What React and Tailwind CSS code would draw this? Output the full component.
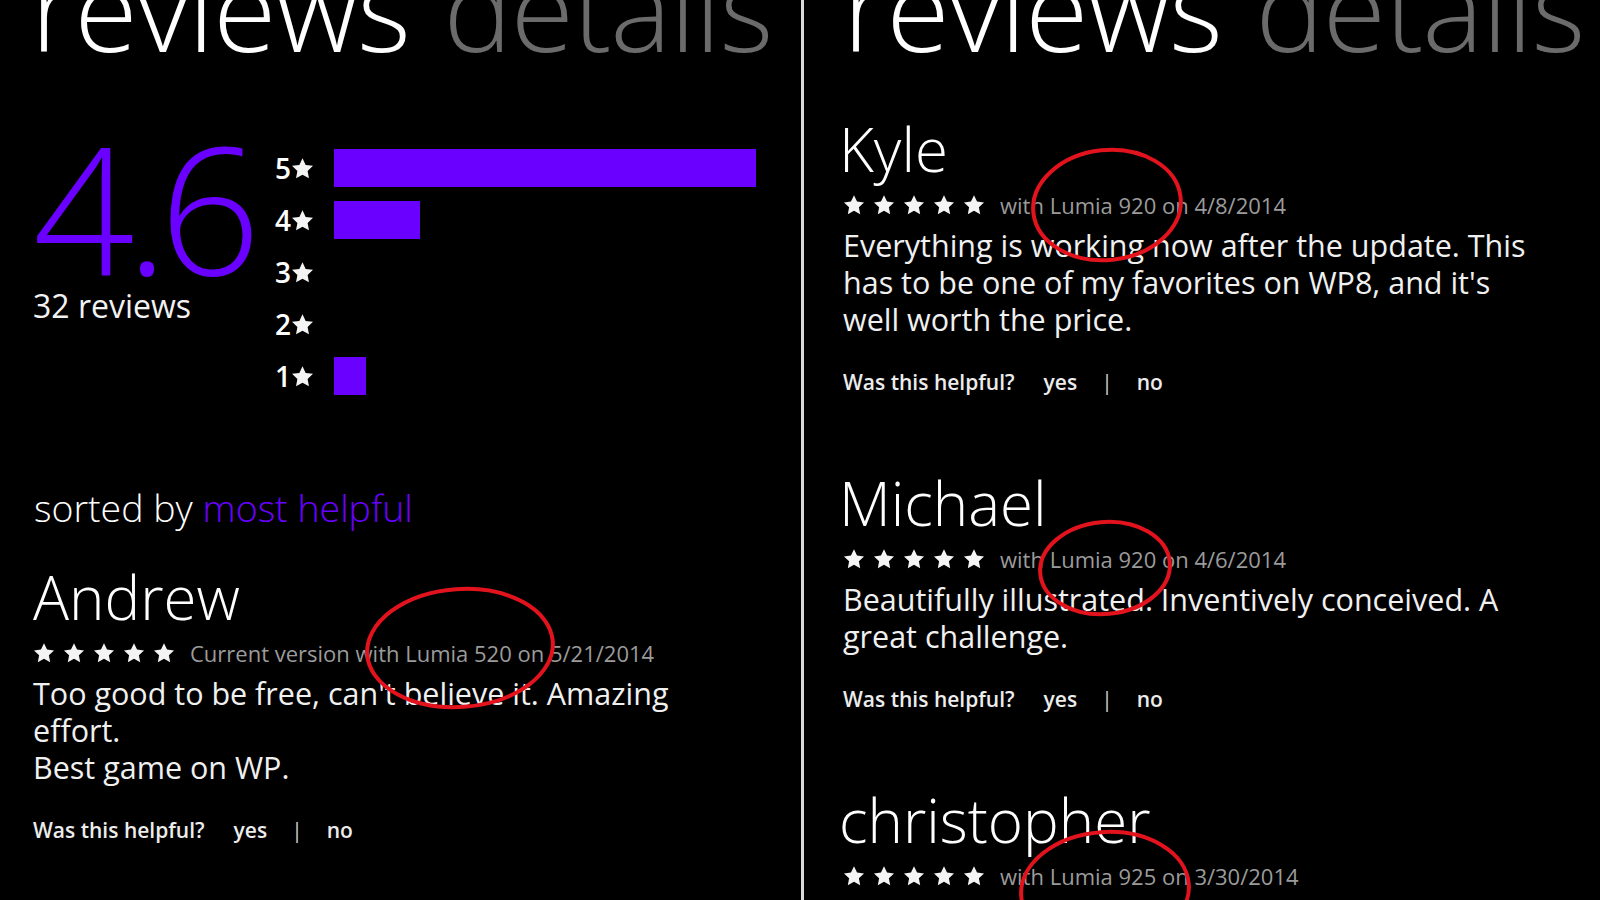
import React from 'react';

const FONT = { fontFamily: '"Open Sans", "Noto Sans", sans-serif' };

const bars = [
    { label: 5, width: 422 },
    { label: 4, width: 86 },
    { label: 3, width: 0 },
    { label: 2, width: 0 },
    { label: 1, width: 32 },
];

const leftReviews = [
    {
        name: 'Andrew',
        meta: 'Current version with Lumia 520 on 5/21/2014',
        body: "Too good to be free, can't believe it. Amazing effort.\nBest game on WP.",
    },
];

const rightReviews = [
    {
        name: 'Kyle',
        meta: 'with Lumia 920 on 4/8/2014',
        body: "Everything is working now after the update. This has to be one of my favorites on WP8, and it's\nwell worth the price.",
    },
    {
        name: 'Michael',
        meta: 'with Lumia 920 on 4/6/2014',
        body: 'Beautifully illustrated. Inventively conceived. A great challenge.',
    },
    {
        name: 'christopher',
        meta: 'with Lumia 925 on 3/30/2014',
        body: '',
    },
];

function Star({ size = 21 }) {
    return (
        <svg width={size} height={size} viewBox="0 0 24 24" className="shrink-0">
            <path
                d="M12 1.3L15.29 8.27 22.94 9.25 17.33 14.53 18.76 22.1 12 18.4 5.24 22.1 6.67 14.53 1.06 9.25 8.71 8.27Z"
                fill="#f4f4f4"
            />
        </svg>
    );
}

function Header() {
    return (
        <div className="-mt-[50px] h-[115px] whitespace-nowrap text-[115px] font-light leading-[115px] tracking-[-0.01em]">
            <span className="text-white">reviews</span>
            <span className="ml-[34px] text-[#6b6b6b]">details</span>
        </div>
    );
}

function Review({ review, first, wide }) {
    return (
        <div className={first ? '' : 'mt-[77px]'}>
            <div
                className={
                    'h-[60px] text-[60px] font-light leading-[60px] text-white ' + (wide ? '-ml-[4px]' : '')
                }
            >
                {review.name}
            </div>
            <div className="mt-[11px] flex h-[30px] items-center">
                <div className="flex gap-[8px]">
                    {[0, 1, 2, 3, 4].map((i) => (
                        <Star key={i} size={22} />
                    ))}
                </div>
                <span className="ml-[15px] text-[22px] leading-[30px] text-[#9b9b9b]">{review.meta}</span>
            </div>
            {review.body && (
                <>
                    <p
                        className={
                            'mt-[7px] whitespace-pre-line text-[30.5px] leading-[37px] text-[#f0f0f0] ' +
                            (wide ? 'max-w-[725px]' : 'max-w-[680px]')
                        }
                    >
                        {review.body}
                    </p>
                    <div className="mt-[30px] flex h-[28px] items-center gap-[29px] text-[21px] font-semibold leading-[28px] text-[#ececec]">
                        <span>Was this helpful?</span>
                        <span>yes</span>
                        <span className="-mx-[5px] font-normal text-[#cfcfcf]">|</span>
                        <span>no</span>
                    </div>
                </>
            )}
        </div>
    );
}

function Annotations() {
    // hand drawn red circles laid over the screenshot
    return (
        <svg className="pointer-events-none absolute inset-0" width="1600" height="900">
            <g fill="none" stroke="#e3131d" strokeWidth="4">
                <ellipse cx="460" cy="648" rx="93" ry="59" transform="rotate(-4 460 648)" />
                <ellipse cx="1107" cy="205" rx="74" ry="55" transform="rotate(-6 1107 205)" />
                <ellipse cx="1105" cy="568" rx="65" ry="46" transform="rotate(-5 1105 568)" />
                <ellipse cx="1105" cy="890" rx="84" ry="58" transform="rotate(-4 1105 890)" />
            </g>
        </svg>
    );
}

export default function App() {
    return (
        <div className="relative flex h-[900px] w-[1600px] overflow-hidden bg-black" style={FONT}>
            {/* left page: summary */}
            <div className="w-[801px] shrink-0 pl-[31px]">
                <Header />
                <div className="mt-[66px] flex">
                    <div className="w-[244px] pl-[2px]">
                        <div className="h-[150px] text-[178px] font-light leading-[150px] tracking-[-0.05em] text-[#6a00ff]">
                            4.6
                        </div>
                        <div className="mt-[6px] text-[32px] leading-[38px] text-[#f2f2f2]">32 reviews</div>
                    </div>
                    <div className="mt-[11px]">
                        {bars.map((bar) => (
                            <div key={bar.label} className="flex h-[52px] items-center">
                                <div className="flex w-[59px] items-center text-[28px] font-semibold leading-none text-white">
                                    <span>{bar.label}</span>
                                    <Star size={23} />
                                </div>
                                <div className="h-[38px] bg-[#6a00ff]" style={{ width: bar.width }} />
                            </div>
                        ))}
                    </div>
                </div>
                <div className="mt-[84px] pl-[3px] text-[37.5px] font-light leading-[44px] text-white">
                    sorted by <span className="text-[#6a00ff]">most helpful</span>
                </div>
                <div className="mt-[37px] pl-[2px]">
                    {leftReviews.map((r) => (
                        <Review key={r.name} review={r} first />
                    ))}
                </div>
            </div>

            <div className="w-[3px] shrink-0 bg-[#d9d9d9]" />

            {/* right page: review list */}
            <div className="flex-1 pl-[39px]">
                <Header />
                <div className="mt-[54px]">
                    {rightReviews.map((r, i) => (
                        <Review key={r.name} review={r} first={i === 0} wide />
                    ))}
                </div>
            </div>

            <Annotations />
        </div>
    );
}
